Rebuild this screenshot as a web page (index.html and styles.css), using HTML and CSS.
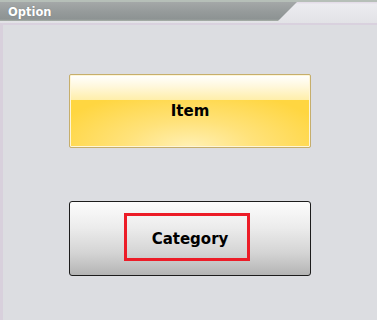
FILE: index.html
```html
<!DOCTYPE html>
<html>
<head>
<meta charset="utf-8">
<link rel="stylesheet" href="styles.css">
</head>
<body>
<div class="header">
  <div class="tab"><span class="title">Option</span></div>
</div>
<div class="panel">
  <div class="buttons">
    <div class="btn btn-item"><span>Item</span></div>
    <div class="btn btn-cat"><span>Category</span><div class="highlight"></div></div>
  </div>
</div>
</body>
</html>
```
FILE: styles.css
```css
html, body {
  margin: 0;
  padding: 0;
  width: 377px;
  height: 320px;
  overflow: hidden;
  background: #dcdde1;
  font-family: "DejaVu Sans", Verdana, sans-serif;
}
.header {
  height: 21px;
  border-top: 2px solid #b6bfb8;
  background: linear-gradient(to bottom, #e4dde8 0px, #e4dde8 1px, #ececf0 2px, #e2e2e6 100%);
  display: flex;
}
.tab {
  width: 297px;
  height: 19px;
  background: linear-gradient(to bottom, #a4a8a8 0%, #969b9b 50%, #8d9393 90%, #a9b1a9 100%);
  clip-path: polygon(0 0, 100% 0, calc(100% - 19px) 100%, 0 100%);
  display: flex;
  align-items: center;
}
.title {
  color: #ffffff;
  font-weight: bold;
  font-size: 11.5px;
  padding-left: 8px;
  padding-top: 1px;
  text-shadow: 0 0 1px rgba(80,90,90,0.6);
}
.panel {
  border-top: 2px solid #d9d1de;
  border-left: 3px solid #d8d0dc;
  height: 297px;
  box-sizing: border-box;
}
.buttons {
  display: flex;
  flex-direction: column;
  gap: 53px;
  padding-top: 49px;
  margin-left: 66px;
  width: 242px;
}
.btn {
  box-sizing: border-box;
  width: 242px;
  display: flex;
  align-items: center;
  justify-content: center;
  font-weight: bold;
  font-size: 15px;
  color: #000;
}
.btn-item {
  height: 74px;
  border: 1px solid #c6ae6c;
  border-radius: 2px;
  box-shadow: inset 0 0 0 1px #fff6d6;
  background:
    linear-gradient(to bottom, #ffffff 0%, #fff8de 15%, #ffeea8 35%, rgba(255,232,138,0) 35.1%),
    radial-gradient(ellipse 60% 80% at 50% 100%, #fff0b4 0%, #ffe27a 45%, #ffd641 100%);
}
.btn-cat {
  position: relative;
  height: 75px;
  border: 1px solid #1c1c1c;
  border-radius: 3px;
  background: linear-gradient(to bottom, #fcfcfc 0%, #ececec 35%, #d4d4d4 70%, #b4b4b4 100%);
}
.highlight {
  position: absolute;
  left: 54px;
  top: 11px;
  width: 126px;
  height: 48px;
  box-sizing: border-box;
  border: 3px solid #ec1c27;
}
```
